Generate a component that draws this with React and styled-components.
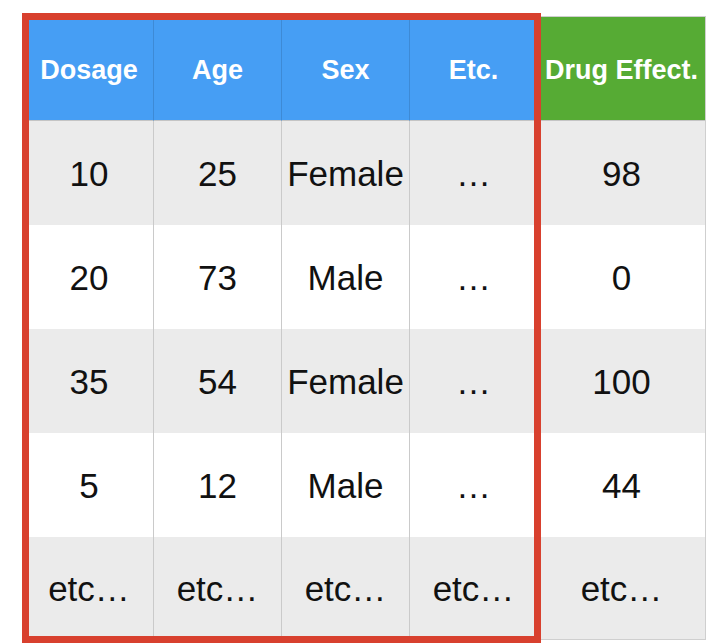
import styled, { createGlobalStyle } from 'styled-components'

const GlobalStyle = createGlobalStyle`
  body {
    margin: 0;
    background: #ffffff;
    font-family: 'Liberation Sans', Arial, Helvetica, sans-serif;
  }
`

const headers = [
  { label: 'Dosage', tone: 'feature' },
  { label: 'Age', tone: 'feature' },
  { label: 'Sex', tone: 'feature' },
  { label: 'Etc.', tone: 'feature' },
  { label: 'Drug Effect.', tone: 'target' },
]

const rows = [
  ['10', '25', 'Female', '…', '98'],
  ['20', '73', 'Male', '…', '0'],
  ['35', '54', 'Female', '…', '100'],
  ['5', '12', 'Male', '…', '44'],
  ['etc…', 'etc…', 'etc…', 'etc…', 'etc…'],
]

const App = () => {
  return (
    <>
      <GlobalStyle />
      <Canvas>
        <Table>
          {headers.map((h, i) => (
            <HeadCell key={h.label} $tone={h.tone} $first={i === 0}>
              {h.label}
            </HeadCell>
          ))}
          {rows.map((row, r) =>
            row.map((value, c) => (
              <Cell key={`${r}-${c}`} $striped={r % 2 === 0} $first={c === 0}>
                {value}
              </Cell>
            ))
          )}
        </Table>
        <Highlight />
      </Canvas>
    </>
  )
}

const Canvas = styled.div`
  position: relative;
  width: 712px;
  height: 644px;
  overflow: hidden;
  padding: 16px 0 0 24px;
  box-sizing: border-box;
`

const Table = styled.div`
  display: grid;
  grid-template-columns: 128px 128px 128px 128px 168px;
  grid-template-rows: repeat(5, 104px) 102px;
  width: max-content;
  border: 1px solid #cfcfcf;
`

const HeadCell = styled.div`
  display: flex;
  align-items: center;
  justify-content: center;
  box-sizing: border-box;
  padding-top: 4px;
  background: ${(p) => (p.$tone === 'target' ? '#56ab34' : '#469ef4')};
  border-left: ${(p) => (p.$first ? 'none' : '1px solid rgba(0, 0, 0, 0.12)')};
  border-bottom: 1px solid #c4c4c4;
  color: #ffffff;
  font-size: 27px;
  font-weight: 700;
  white-space: nowrap;
`

const Cell = styled.div`
  display: flex;
  align-items: center;
  justify-content: center;
  box-sizing: border-box;
  padding-top: 2px;
  background: ${(p) => (p.$striped ? '#ebebeb' : '#ffffff')};
  border-left: ${(p) => (p.$first ? 'none' : '1px solid #cacaca')};
  color: #111111;
  font-size: 35px;
  white-space: nowrap;
`

const Highlight = styled.div`
  position: absolute;
  left: 22px;
  top: 13px;
  width: 519px;
  height: 630px;
  box-sizing: border-box;
  border: 7px solid #d8402e;
  pointer-events: none;
`

export default App
